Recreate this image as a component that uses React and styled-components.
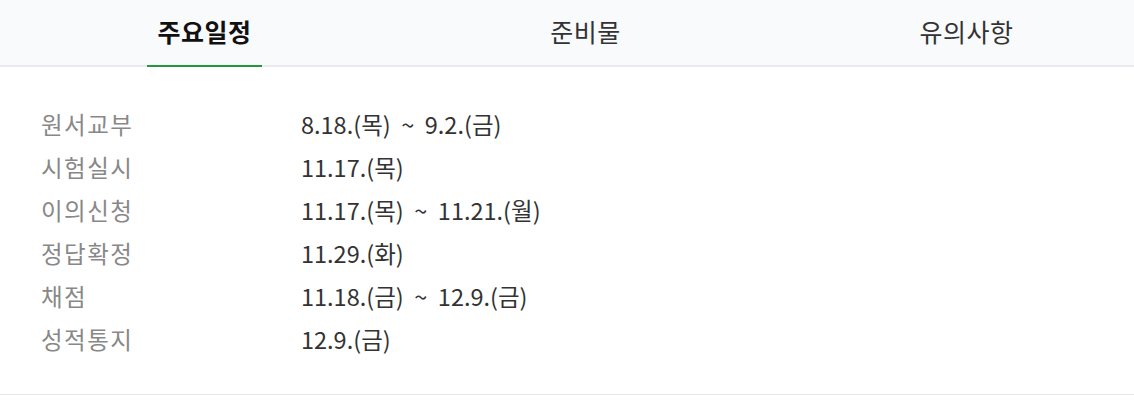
import React, { useState } from "react";
import styled, { createGlobalStyle } from "styled-components";

const GlobalStyle = createGlobalStyle`
  html, body {
    margin: 0;
    padding: 0;
    background: #ffffff;
    overflow: hidden;
  }
  body {
    font-family: "Noto Sans CJK KR", "Noto Sans", sans-serif;
  }
`;

const Container = styled.div`
  width: 1134px;
  overflow: hidden;
`;

const TabBar = styled.div`
  display: grid;
  grid-template-columns: repeat(3, 381px);
  padding-left: 14px;
  height: 65px;
  background: #f8fafc;
  border-bottom: 2px solid #e9ebee;
`;

const Tab = styled.button`
  position: relative;
  display: flex;
  justify-content: center;
  align-items: center;
  border: none;
  background: none;
  padding: 0 0 4px;
  font-family: inherit;
  font-size: 25px;
  font-weight: ${(p) => (p.$active ? 700 : 400)};
  color: ${(p) => (p.$active ? "#111" : "#333")};
  letter-spacing: 0.5px;
  cursor: pointer;

  span {
    position: relative;
    padding: 0 10px;
    height: 100%;
    display: flex;
    align-items: center;
  }

  span::after {
    content: "";
    display: ${(p) => (p.$active ? "block" : "none")};
    position: absolute;
    left: 0;
    right: 0;
    bottom: -6px;
    height: 2px;
    background: #23963f;
  }
`;

const Schedule = styled.dl`
  display: grid;
  grid-template-columns: 260px 1fr;
  grid-auto-rows: 43px;
  margin: 0;
  padding: 35px 0 34px 41px;
  border-bottom: 1px solid #e6e6e6;
  font-size: 23.5px;
`;

const Label = styled.dt`
  display: flex;
  align-items: center;
  color: #888;
  letter-spacing: 1.5px;
`;

const Value = styled.dd`
  display: flex;
  align-items: center;
  margin: 0;
  color: #333;
  white-space: pre;
`;

const tabs = ["주요일정", "준비물", "유의사항"];

const rows = [
  ["원서교부", "8.18.(목)  ~  9.2.(금)"],
  ["시험실시", "11.17.(목)"],
  ["이의신청", "11.17.(목)  ~  11.21.(월)"],
  ["정답확정", "11.29.(화)"],
  ["채점", "11.18.(금)  ~  12.9.(금)"],
  ["성적통지", "12.9.(금)"],
];

const App = () => {
  const [active, setActive] = useState(0);

  return (
    <Container>
      <GlobalStyle />
      <TabBar>
        {tabs.map((t, i) => (
          <Tab key={t} $active={active === i} onClick={() => setActive(i)}>
            <span>{t}</span>
          </Tab>
        ))}
      </TabBar>
      <Schedule>
        {rows.map(([label, value]) => (
          <React.Fragment key={label}>
            <Label>{label}</Label>
            <Value>{value}</Value>
          </React.Fragment>
        ))}
      </Schedule>
    </Container>
  );
};

export default App;
